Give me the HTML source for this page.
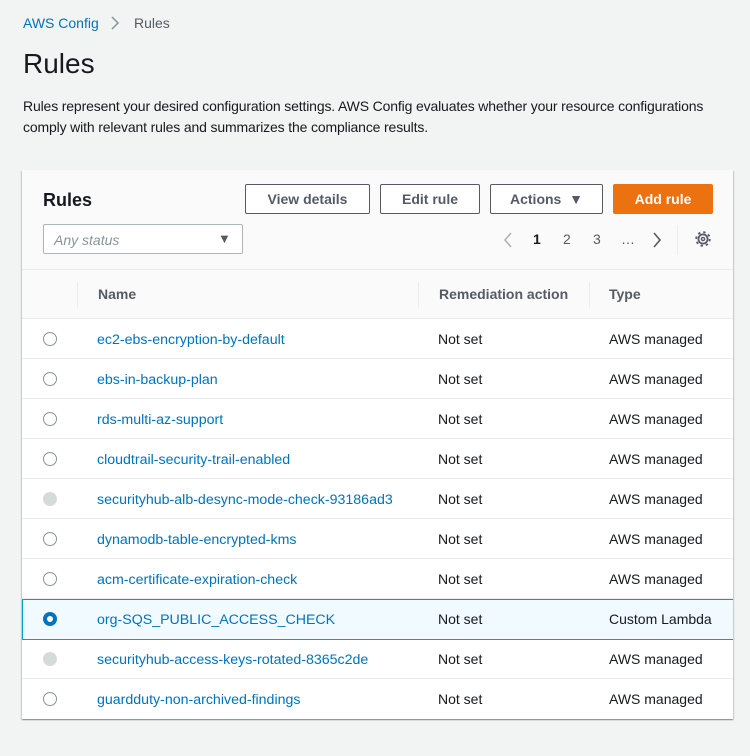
<!DOCTYPE html>
<html><head><meta charset="utf-8"><style>
*{box-sizing:border-box;margin:0;padding:0}
body{width:750px;height:756px;background:#f2f3f3;font-family:"Liberation Sans",sans-serif;color:#16191f;position:relative;overflow:hidden}
.a{position:absolute;white-space:nowrap}
.link{color:#0073bb}
.panel{position:absolute;left:22px;top:170px;width:711px;height:549px;background:#fff;box-shadow:0 1px 1px 0 rgba(0,28,36,.3),1px 1px 1px 0 rgba(0,28,36,.15),-1px 1px 1px 0 rgba(0,28,36,.15);overflow:hidden}
.hdr{position:absolute;left:0;top:0;width:712px;height:100px;background:#fafafa;border-bottom:1px solid #eaeded}
.btn{position:absolute;top:14px;height:30px;border:1px solid #545b64;background:#fff;font-weight:bold;font-size:14px;color:#545b64;text-align:center;line-height:28px;border-radius:2px}
.th{position:absolute;top:100px;left:0;width:712px;height:49px;background:#fafafa;border-bottom:1px solid #eaeded;font-weight:bold;font-size:14px;color:#545b64}
.sep{position:absolute;top:12px;width:1px;height:26px;background:#eaeded}
.row{position:absolute;left:0;width:712px;height:40px;border-bottom:1px solid #eaeded;font-size:14px}
.row span{position:absolute;top:12px;line-height:16px}
.row span.link{font-size:14.2px;top:13px}
.sel-row span.link{top:12px}
.rad{position:absolute;left:21px;top:13px;width:14px;height:14px;border-radius:50%;border:1px solid #879596;background:#fff}
.rad.dis{background:#d5dbdb;border-color:#d5dbdb}
.rad.sel{border:4px solid #0073bb}
.sel-row{background:#f1faff;border:1px solid #00a1c9}
</style></head><body>
<div class="a link" style="left:23px;top:15px;font-size:14px">AWS Config</div>
<svg class="a" style="left:110px;top:16px" width="10" height="14"><path d="M2 1l6 6-6 6" fill="none" stroke="#879596" stroke-width="1.5"/></svg>
<div class="a" style="left:134px;top:15px;font-size:14px;color:#545b64">Rules</div>
<div class="a" style="left:23px;top:48px;font-size:28px">Rules</div>
<div class="a" style="left:23px;top:96px;font-size:14px;line-height:21px;letter-spacing:-0.15px">Rules represent your desired configuration settings. AWS Config evaluates whether your resource configurations<br>comply with relevant rules and summarizes the compliance results.</div>

<div class="panel">
 <div class="hdr">
  <div class="a" style="left:21px;top:20px;font-size:18px;font-weight:bold">Rules</div>
  <div class="btn" style="left:223px;width:125px">View details</div>
  <div class="btn" style="left:358px;width:100px">Edit rule</div>
  <div class="btn" style="left:468px;width:113px">Actions &nbsp;▼</div>
  <div class="btn" style="left:591px;width:100px;background:#ec7211;border-color:#ec7211;color:#fff">Add rule</div>
  <div class="a" style="left:21px;top:54px;width:200px;height:30px;border:1px solid #aab7b8;background:#fff;border-radius:2px">
   <span class="a" style="left:10px;top:7px;font-size:14px;font-style:italic;color:#879596">Any status</span>
   <span class="a" style="left:174px;top:6px;font-size:13px;color:#545b64">▼</span>
  </div>
  <svg class="a" style="left:480px;top:62px" width="12" height="16"><path d="M9 1L3 8l6 7" fill="none" stroke="#aab7b8" stroke-width="1.6"/></svg>
  <div class="a" style="left:511px;top:61px;font-size:14px;font-weight:bold">1</div>
  <div class="a" style="left:541px;top:61px;font-size:14px;color:#545b64">2</div>
  <div class="a" style="left:571px;top:61px;font-size:14px;color:#545b64">3</div>
  <div class="a" style="left:599px;top:61px;font-size:14px;color:#545b64">…</div>
  <svg class="a" style="left:629px;top:62px" width="12" height="16"><path d="M3 1l6 7-6 7" fill="none" stroke="#545b64" stroke-width="1.6"/></svg>
  <div class="a" style="left:655px;top:55px;width:1px;height:30px;background:#eaeded"></div>
  <svg class="a" style="left:672px;top:60px" width="18" height="18" viewBox="0 0 18 18">
   <circle cx="9" cy="9" r="6.8" fill="none" stroke="#545b64" stroke-width="1.8" stroke-dasharray="2.4 2.94"/>
   <circle cx="9" cy="9" r="4.6" fill="none" stroke="#545b64" stroke-width="1.8"/>
   <circle cx="9" cy="9" r="1.6" fill="none" stroke="#545b64" stroke-width="1.4"/>
  </svg>
 </div>
 <div class="th">
  <div class="sep" style="left:55px"></div>
  <span class="a" style="left:76px;top:16px">Name</span>
  <div class="sep" style="left:396px"></div>
  <span class="a" style="left:417px;top:16px">Remediation action</span>
  <div class="sep" style="left:567px"></div>
  <span class="a" style="left:587px;top:16px">Type</span>
 </div>
 <div class="row" style="top:149px"><div class="rad"></div><span class="link" style="left:75px">ec2-ebs-encryption-by-default</span><span style="left:416px">Not set</span><span style="left:587px">AWS managed</span></div>
 <div class="row" style="top:189px"><div class="rad"></div><span class="link" style="left:75px">ebs-in-backup-plan</span><span style="left:416px">Not set</span><span style="left:587px">AWS managed</span></div>
 <div class="row" style="top:229px"><div class="rad"></div><span class="link" style="left:75px">rds-multi-az-support</span><span style="left:416px">Not set</span><span style="left:587px">AWS managed</span></div>
 <div class="row" style="top:269px"><div class="rad"></div><span class="link" style="left:75px">cloudtrail-security-trail-enabled</span><span style="left:416px">Not set</span><span style="left:587px">AWS managed</span></div>
 <div class="row" style="top:309px"><div class="rad dis"></div><span class="link" style="left:75px">securityhub-alb-desync-mode-check-93186ad3</span><span style="left:416px">Not set</span><span style="left:587px">AWS managed</span></div>
 <div class="row" style="top:349px"><div class="rad"></div><span class="link" style="left:75px">dynamodb-table-encrypted-kms</span><span style="left:416px">Not set</span><span style="left:587px">AWS managed</span></div>
 <div class="row" style="top:389px"><div class="rad"></div><span class="link" style="left:75px">acm-certificate-expiration-check</span><span style="left:416px">Not set</span><span style="left:587px">AWS managed</span></div>
 <div class="row sel-row" style="top:429px;height:41px"><div class="rad sel" style="left:20px;top:12px"></div><span class="link" style="left:74px">org-SQS_PUBLIC_ACCESS_CHECK</span><span style="left:415px;top:11px">Not set</span><span style="left:586px;top:11px">Custom Lambda</span></div>
 <div class="row" style="top:469px"><div class="rad dis"></div><span class="link" style="left:75px">securityhub-access-keys-rotated-8365c2de</span><span style="left:416px">Not set</span><span style="left:587px">AWS managed</span></div>
 <div class="row" style="top:509px;border-bottom:none"><div class="rad"></div><span class="link" style="left:75px">guardduty-non-archived-findings</span><span style="left:416px">Not set</span><span style="left:587px">AWS managed</span></div>
</div>
</body></html>
